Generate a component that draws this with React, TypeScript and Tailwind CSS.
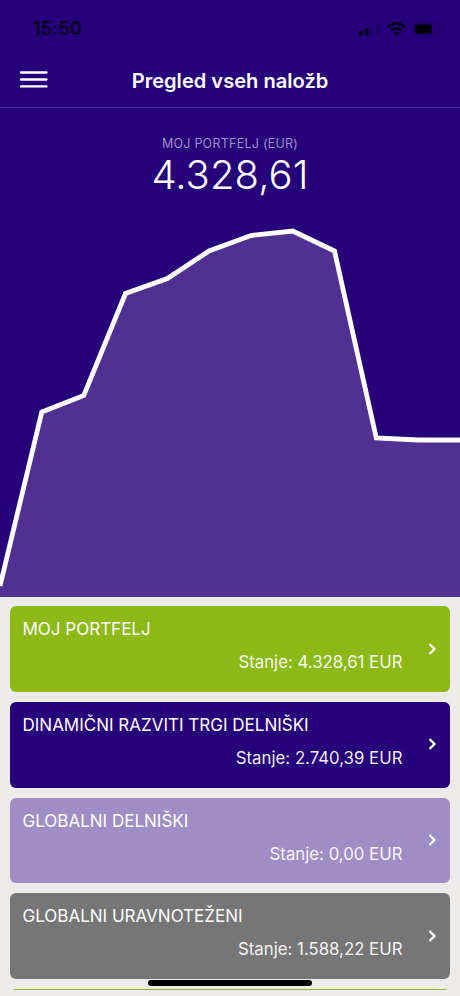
type Fund = {
  name: string;
  balance: string;
  color: string;
};

const FUNDS: Fund[] = [
  { name: "MOJ PORTFELJ", balance: "4.328,61", color: "bg-[#8cb916]" },
  { name: "DINAMIČNI RAZVITI TRGI DELNIŠKI", balance: "2.740,39", color: "bg-[#26007a]" },
  { name: "GLOBALNI DELNIŠKI", balance: "0,00", color: "bg-[#a08dc5]" },
  { name: "GLOBALNI URAVNOTEŽENI", balance: "1.588,22", color: "bg-[#767676]" },
];

const CHART_POINTS = "0,386 41.8,212 83.8,195.5 125.5,93.5 167.3,78.5 209,51 250.9,35.5 292.7,31 334.5,51 376.3,238 418.2,240 462,240";

function StatusBar() {
  return (
    <div className="flex h-[57px] items-center justify-between pl-[33px] pr-[19px]">
      <span className="text-[18px] font-semibold leading-none tracking-[0.2px] text-[#080018]">15:50</span>
      <div className="flex items-center gap-[7px]">
        {/* Signal */}
        <svg width="21" height="14" viewBox="0 0 21 14">
          <rect x="0" y="8.8" width="3.8" height="4.6" rx="1" fill="#030010" />
          <rect x="5.8" y="6.5" width="3.8" height="6.9" rx="1" fill="#030010" />
          <rect x="11.4" y="3.5" width="3.6" height="9.9" rx="1" fill="#1f0068" />
          <rect x="17" y="1" width="3.6" height="12.4" rx="1" fill="#1f0068" />
        </svg>
        {/* Wifi */}
        <svg width="19" height="14" viewBox="0 0 19 14" fill="none" stroke="#030010" strokeWidth="2.7">
          <path d="M1 5.1a12.2 12.2 0 0 1 17 0" />
          <path d="M4.2 8.6a7.6 7.6 0 0 1 10.6 0" />
          <path d="M9.5 13.6 6.6 10.8a4.2 4.2 0 0 1 5.8 0z" fill="#030010" stroke="none" />
        </svg>
        {/* Battery */}
        <svg width="28" height="14" viewBox="0 0 28 14">
          <rect x="0.5" y="0.8" width="24.5" height="12.4" rx="3.6" fill="none" stroke="#1a005a" />
          <rect x="2.2" y="2.5" width="16.4" height="9" rx="1.4" fill="#010008" />
          <path d="M26.3 5v4.2c.9-.3 1.4-1.1 1.4-2.1s-.5-1.8-1.4-2.1z" fill="#1a005a" />
        </svg>
      </div>
    </div>
  );
}

function Header() {
  return (
    <header className="h-[108px] border-b border-[#4a2b92]">
      <StatusBar />
      <div className="grid h-[48px] grid-cols-[66px_1fr_66px] items-center">
        <button className="pb-1 pl-[19px]" aria-label="Meni">
          <svg width="29" height="18" viewBox="0 0 29 18" stroke="#fff" strokeWidth="2.3" strokeLinecap="round">
            <path d="M2 2.5h25.500M2 9.500h25.500M2 16.400h25.500" />
          </svg>
        </button>
        <h1 className="whitespace-nowrap text-center text-[20.1px] font-semibold leading-6 text-white">
          Pregled vseh naložb
        </h1>
      </div>
    </header>
  );
}

function Portfolio() {
  return (
    <section className="flex h-[488.5px] flex-col">
      <div className="h-[92px] shrink-0 pt-[28px] text-center">
        <p className="text-[12.5px] leading-4 tracking-[0.25px] text-[#a08fc9]">MOJ PORTFELJ (EUR)</p>
        <p className="text-[40px] font-light leading-[45px] tracking-[0.1px] text-white">4.328,61</p>
      </div>
      <svg width="460" height="396.5" viewBox="0 0 460 396.5" className="block shrink-0">
        <polygon points={`${CHART_POINTS} 462,398 0,398`} fill="#503192" />
        <polyline points={CHART_POINTS} fill="none" stroke="#fff" strokeWidth="4.8" />
      </svg>
    </section>
  );
}

function FundCard({ name, balance, color }: Fund) {
  return (
    <li className={`flex h-[85.7px] shrink-0 items-center rounded-[6px] pl-[12.5px] pr-[12px] text-white ${color}`}>
      <div className="flex h-full flex-1 flex-col justify-between pb-[17.5px] pt-[11px]">
        <span className="text-[17px] leading-6">{name}</span>
        <span className="text-right text-[16.8px] leading-6 text-white/95">Stanje: {balance} EUR</span>
      </div>
      <svg width="11" height="14" viewBox="0 0 11 14" fill="none" stroke="#fff" strokeWidth="2.2" className="mb-px ml-[24.5px]">
        <path d="M2.5 2 7.5 7l-5 5" />
      </svg>
    </li>
  );
}

export default function App() {
  return (
    <main className="relative h-[996px] w-[460px] overflow-hidden bg-[#edebea] font-['Inter',sans-serif]">
      <div className="bg-[#26007a]">
        <Header />
        <Portfolio />
      </div>
      <ul className="flex h-[393.5px] flex-col gap-[10px] overflow-hidden px-[10px] pt-[9.7px]">
        {FUNDS.map((fund) => (
          <FundCard key={fund.name} {...fund} />
        ))}
        {/* Top edge of the next card in the list */}
        <li className="h-[85.7px] shrink-0 rounded-[6px] bg-[#8cb916]" />
      </ul>
      {/* Home indicator */}
      <div className="absolute left-[148px] top-[980px] h-[6px] w-[164px] rounded-full bg-black" />
    </main>
  );
}
